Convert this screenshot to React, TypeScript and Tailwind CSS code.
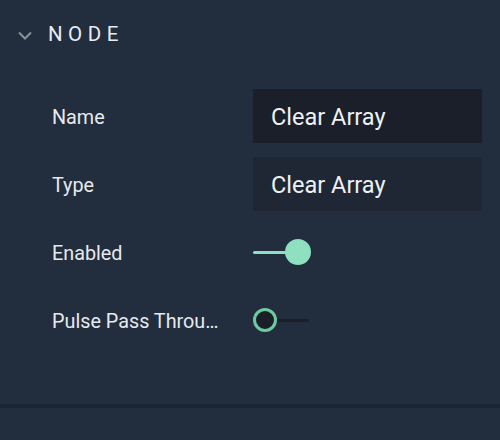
import React from "react";

function Toggle({ on }: { on: boolean }) {
  return on ? (
    <div className="relative w-[58px] h-[26px] flex items-center">
      <div className="h-[3px] w-[46px] bg-[#8ee0c1] rounded-full" />
      <div className="absolute left-[32px] top-0 w-[26px] h-[26px] rounded-full bg-[#8ee0c1]" />
    </div>
  ) : (
    <div className="relative w-[58px] h-[26px] flex items-center">
      <div className="h-[3px] w-[46px] ml-[10px] bg-[#1a1f28] rounded-full" />
      <div className="absolute left-0 top-[1px] w-[24px] h-[24px] rounded-full bg-[#1a1f28] border-[3px] border-[#6cc9a0]" />
    </div>
  );
}

export default function App() {
  const font = { fontFamily: "Roboto, 'Liberation Sans', sans-serif" };
  return (
    <div className="w-[500px] h-[440px] bg-[#222d3e] flex flex-col" style={font}>
      <div className="flex items-center h-[68px] pl-[17px]">
        <svg width="16" height="11" viewBox="0 0 16 11" className="mt-[2px]">
          <path d="M2 2.5 L8 8.5 L14 2.5" stroke="#8a919b" strokeWidth="2" fill="none" />
        </svg>
        <span className="ml-[15px] text-[20.5px] tracking-[5.5px] text-[#e8ecf2]">NODE</span>
      </div>
      <div className="flex flex-col pl-[52px] pt-[21px]">
        <div className="flex items-center h-[54px]">
          <span className="w-[201px] text-[19.8px] text-[#e6e9ee] pt-[3px]">Name</span>
          <div className="w-[229px] h-[54px] bg-[#1a1f29] flex items-center pl-[18px] pt-[3px] text-[23.5px] text-[#eef1f5]">Clear Array</div>
        </div>
        <div className="flex items-center h-[54px] mt-[14px]">
          <span className="w-[201px] text-[19.8px] text-[#e6e9ee] pt-[3px]">Type</span>
          <div className="w-[229px] h-[54px] bg-[#1f2735] flex items-center pl-[18px] pt-[3px] text-[23.5px] text-[#eef1f5]">Clear Array</div>
        </div>
        <div className="flex items-center h-[54px] mt-[14px]">
          <span className="w-[201px] text-[19.8px] text-[#e6e9ee] pt-[3px]">Enabled</span>
          <Toggle on />
        </div>
        <div className="flex items-center h-[54px] mt-[14px]">
          <span className="w-[201px] text-[19.8px] text-[#e6e9ee] whitespace-nowrap pt-[3px]">Pulse Pass Throu…</span>
          <Toggle on={false} />
        </div>
      </div>
      <div className="mt-auto mb-[32px] h-[4px] bg-[#1c2534]" />
    </div>
  );
}
